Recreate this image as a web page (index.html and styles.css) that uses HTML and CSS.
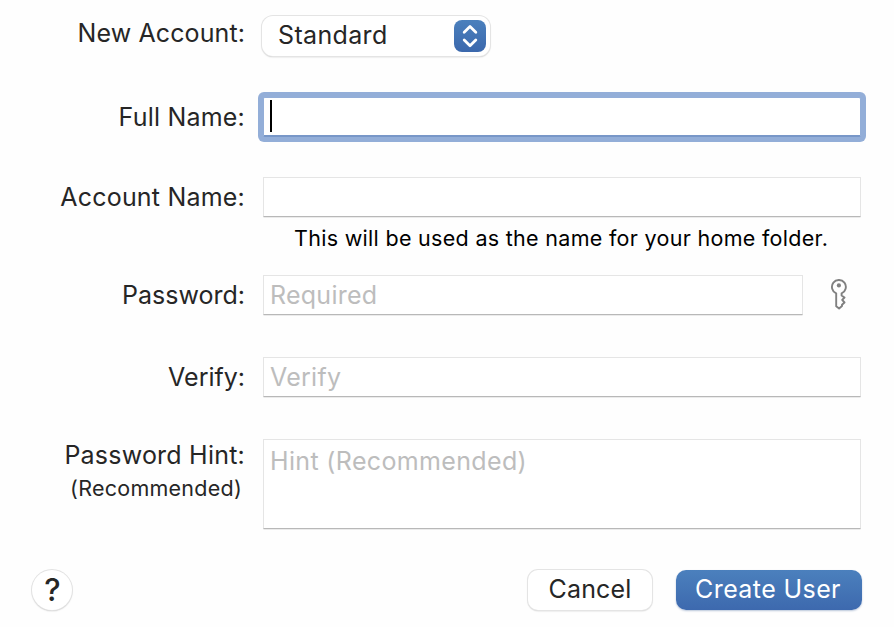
FILE: index.html
```html
<!DOCTYPE html>
<html lang="en">
<head>
<meta charset="utf-8">
<title>New Account</title>
<link rel="stylesheet" href="styles.css">
</head>
<body>
<main class="sheet">
  <div class="row row-type">
    <span class="label label-type">New Account:</span>
    <div class="popup">
      <span class="popup-text">Standard</span>
      <span class="stepper">
        <svg width="32" height="32" viewBox="0 0 32 32" fill="none" stroke="#fff" stroke-width="2.8" stroke-linecap="round" stroke-linejoin="round"><path d="M10.200 12.200 16 6.500l5.800 5.700M10.200 20 16 25.700l5.800-5.700"/></svg>
      </span>
    </div>
  </div>
  <div class="row row-full">
    <span class="label label-full">Full Name:</span>
    <div class="field focused"><span class="caret"></span></div>
  </div>
  <div class="row row-account">
    <span class="label label-account">Account Name:</span>
    <div class="field"></div>
  </div>
  <p class="note">This will be used as the name for your home folder.</p>
  <div class="row row-password">
    <span class="label">Password:</span>
    <div class="field field-short"><span class="hint">Required</span></div>
    <svg class="key" width="20" height="32" viewBox="0 0 20 32" fill="none" stroke="#808080" stroke-width="1.9" stroke-linejoin="round"><path d="M7.200 14.300A6.950 6.950 0 1 1 12.600 14.300V16.500L15.500 18.500 13.200 20.900 15.500 23.500 13 25.700V27L10.100 29.500 7.200 27.200Z"/><circle cx="9.900" cy="6.400" r="2.100" fill="#808080" stroke="none"/></svg>
  </div>
  <div class="row row-verify">
    <span class="label">Verify:</span>
    <div class="field"><span class="hint">Verify</span></div>
  </div>
  <div class="row row-hint">
    <div class="label-stack">
      <span class="label label-hint">Password Hint:</span>
      <span class="sublabel">(Recommended)</span>
    </div>
    <div class="field field-tall"><span class="hint hint-long">Hint (Recommended)</span></div>
  </div>
  <footer class="actions">
    <div class="help">?</div>
    <div class="button cancel">Cancel</div>
    <div class="button create">Create User</div>
  </footer>
</main>
</body>
</html>
```
FILE: styles.css
```css
* { box-sizing: border-box; }
body {
  margin: 0;
  background: #fefefe;
  color: #262626;
  font: 25px/40px Inter, "Liberation Sans", sans-serif;
}
.sheet {
  width: 894px;
  height: 627px;
  padding-top: 15px;
  overflow: hidden;
}
.row { display: flex; align-items: flex-start; white-space: nowrap; }
.label { width: 245px; margin-right: 18px; text-align: right; flex: none; line-height: 41px; }
.label-type { line-height: 37px; letter-spacing: 0.1px; }
.label-full, .label-account { letter-spacing: 0.2px; }
.label-hint { letter-spacing: 0.22px; }
.row-type { height: 82px; }
.row-type .popup { margin-left: -1px; }
.popup {
  width: 228px;
  height: 40px;
  display: flex;
  justify-content: space-between;
  padding: 5px 4px 0 16px;
  margin-top: 1px;
  border-radius: 11px;
  background: #fff;
  box-shadow: 0 0 0 1px #e4e4e4, 0 1px 1.5px 0 #b4b4b4;
}
.popup-text { line-height: 28px; letter-spacing: 0.35px; }
.stepper {
  width: 32px;
  height: 32px;
  margin-top: -1px;
  border-radius: 8px;
  background: linear-gradient(#4b80bd, #3b68ad);
}
.stepper svg { display: block; }
.row-full { height: 80px; }
.field {
  width: 598px;
  height: 40px;
  padding-left: 6px;
  background: #fff;
  border: 1px solid #e5e5e5;
  border-bottom: 1px solid #b8b8b8;
  box-shadow: 0 1px 0 -0.5px #d8d8d8;
}
.focused {
  height: 40px;
  border: 1px solid #93aed8;
  border-bottom: 2px solid #7897c8;
  box-shadow: 0 0 0 5px #93aed8;
  border-radius: 2px;
  padding: 2px 0 0 6px;
}
.caret { display: block; width: 2px; height: 32px; background: #000; }
.row-account { height: 47px; }
.note { margin: 0 0 0 294px; height: 51px; font-size: 21.500px; line-height: 28px; letter-spacing: 0.3px; color: #000; white-space: nowrap; }
.row-password { height: 82px; }
.field-short { width: 540px; }
.key { margin: 4px 0 0 26px; }
.hint { color: #bdbdbd; line-height: 38px; display: block; letter-spacing: 0.25px; }
.row-verify { height: 82px; }
.row-hint { height: 131px; }
.label-stack { width: 263px; display: flex; flex-direction: column; }
.label-stack .label { line-height: 32px; }
.sublabel { width: 242px; text-align: right; font-size: 21.500px; line-height: 34px; letter-spacing: 0.25px; }
.field-tall { height: 90px; }
.field-tall .hint { line-height: 42px; letter-spacing: 0.35px; }
.actions { display: flex; padding-left: 32px; }
.help {
  width: 40px;
  height: 40px;
  margin-right: 456px;
  border-radius: 50%;
  background: #fff;
  box-shadow: 0 0 0 1px #e2e2e2, 0 1px 1.5px 0 #b8b8b8;
  text-align: center;
  font-size: 31px;
  font-weight: 500;
  padding-left: 1px;
}
.button { height: 40px; border-radius: 10px; text-align: center; line-height: 38px; }
.cancel { width: 124px; background: #fff; margin-right: 24px; letter-spacing: 0.15px; box-shadow: 0 0 0 1px #e4e4e4, 0 1px 1.5px 0 #b4b4b4; }
.create { width: 186px; color: #fff; letter-spacing: 0.4px; padding-right: 2px; background: linear-gradient(#4b80bd, #3d69ae); box-shadow: 0 1px 2px #b9c6da; }
```
